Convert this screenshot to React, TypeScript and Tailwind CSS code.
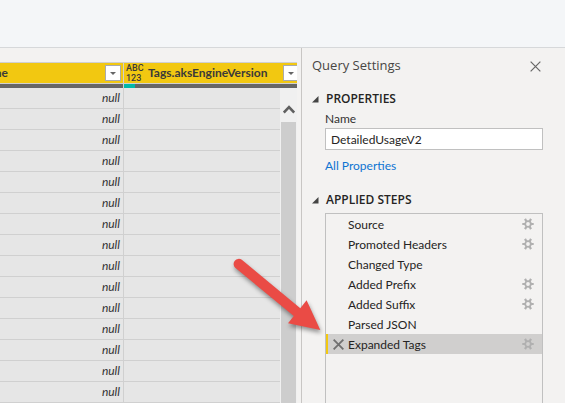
import React from "react";

type Step = { name: string; configurable: boolean };

const steps: Step[] = [
  { name: "Source", configurable: true },
  { name: "Promoted Headers", configurable: true },
  { name: "Changed Type", configurable: false },
  { name: "Added Prefix", configurable: true },
  { name: "Added Suffix", configurable: true },
  { name: "Parsed JSON", configurable: false },
  { name: "Expanded Tags", configurable: true },
];

const rows = Array.from({ length: 15 }, (_, i) => i);

function Gear() {
  return (
    <svg width="12" height="12" viewBox="0 0 12 12" fill="none" stroke="#b0b0b0" aria-hidden="true">
      <circle cx="6" cy="6" r="2.8" strokeWidth="1.8" />
      <path d="M0.3 6H3M9 6h2.7M3 0.9l1.5 2.6M7.5 8.5l1.5 2.6M9 0.9L7.5 3.5M4.5 8.5L3 11.1" strokeWidth="2.2" />
    </svg>
  );
}

function Cross({ size, color, weight }: { size: number; color: string; weight: number }) {
  return (
    <svg width={size} height={size} viewBox="0 0 12 12" fill="none" stroke={color} strokeWidth={weight} aria-hidden="true">
      <path d="M0.7 0.7l10.6 10.6M11.3 0.7L0.7 11.3" />
    </svg>
  );
}

function FilterButton({ label }: { label: string }) {
  return (
    <button type="button" aria-label={label} className="flex size-4 shrink-0 items-center justify-center border border-[#ababab] bg-white">
      <svg width="6" height="3" viewBox="0 0 6 3" aria-hidden="true">
        <path d="M0 0h6L3 3z" fill="#666" />
      </svg>
    </button>
  );
}

function SectionTitle({ children }: { children: React.ReactNode }) {
  return (
    <h3 className="flex h-4 items-center font-['Open_Sans','Noto_Sans',sans-serif] text-xs font-semibold text-[#252423]">
      <svg width="7" height="7" viewBox="0 0 7 7" className="mr-[7px]" aria-hidden="true">
        <path d="M6.5 0v6.5H0z" fill="#444" />
      </svg>
      {children}
    </h3>
  );
}

function DataGrid() {
  return (
    <div className="relative mr-1 min-w-0 flex-1 overflow-hidden pt-[14px]">
      <table className="w-full table-fixed border-separate border-spacing-0 bg-[#e6e6e6]">
        <thead>
          <tr>
            <th className="w-[124px] border-y border-r border-[#d0d0d0] bg-[#f2c811] p-0">
              <div className="flex h-5 items-center justify-between overflow-hidden pr-[2px] text-xs font-bold text-[#3b3a39]">
                <span className="flex w-2 justify-end">ne</span>
                <FilterButton label="Filter name column" />
              </div>
            </th>
            <th className="border-y border-[#d0d0d0] bg-[#f2c811] p-0">
              <div className="flex h-5 items-center pl-[2px] text-[#3b3a39]">
                <span className="flex w-[22px] shrink-0 flex-col text-left font-[Roboto,'Noto_Sans',sans-serif] text-[9px] leading-[10px] font-medium">
                  <span>ABC</span>
                  <span>123</span>
                </span>
                <span className="flex-1 text-left text-xs font-bold whitespace-nowrap">Tags.aksEngineVersion</span>
                <span className="-mr-[2px]">
                  <FilterButton label="Filter Tags.aksEngineVersion" />
                </span>
              </div>
            </th>
          </tr>
          <tr>
            <td className="h-1 border-r border-[#d0d0d0] bg-[#666] p-0" />
            <td className="h-1 bg-[#666] p-0">
              <div className="h-1 w-[11px] bg-[#01b8aa]" />
            </td>
          </tr>
        </thead>
        <tbody>
          {rows.map((row) => (
            <tr key={row}>
              <td className="h-[21px] border-r border-b border-[#d0d0d0] p-0 pr-[3px] text-right text-xs leading-5 text-[#333] italic">
                null
              </td>
              <td className="border-b border-[#d0d0d0] p-0" />
            </tr>
          ))}
        </tbody>
      </table>
      <div className="absolute top-10 right-0 bottom-0 flex w-[17px] flex-col items-center bg-[#f0f0f0]">
        <svg width="12" height="34" viewBox="0 0 12 34" className="shrink-0" fill="none" stroke="#606060" strokeWidth="2.6" aria-hidden="true">
          <path d="M0.8 24.5L6 19.2l5.2 5.3" />
        </svg>
        <div className="w-[15px] flex-1 bg-[#cdcdcd]" />
      </div>
    </div>
  );
}

function QuerySettings() {
  return (
    <aside className="flex w-[264px] shrink-0 flex-col border-l border-[#c8c6c4] pr-[22px] pl-[10px]">
      <header className="flex h-9 items-center justify-between pr-[2px]">
        <h2 className="font-['Open_Sans','Noto_Sans',sans-serif] text-[13px] text-[#484644]">Query Settings</h2>
        <button type="button" aria-label="Close">
          <Cross size={11} color="#666" weight={1.3} />
        </button>
      </header>
      <div className="pt-[7px]">
        <SectionTitle>PROPERTIES</SectionTitle>
      </div>
      <div className="flex flex-col items-start pt-1 pl-[13px] text-xs text-[#333]">
        <label htmlFor="query-name" className="leading-4">
          Name
        </label>
        <input
          id="query-name"
          defaultValue="DetailedUsageV2"
          className="mt-[1px] h-[22px] w-full border border-[#c0c0c0] bg-white px-[5px] text-[#252423] outline-none"
        />
        <a href="#properties" className="mt-2 leading-4 text-[#0e74d1]">
          All Properties
        </a>
      </div>
      <div className="pt-[18px]">
        <SectionTitle>APPLIED STEPS</SectionTitle>
      </div>
      <ul className="mt-[5px] ml-[13px] flex-1 border border-b-0 border-[#c0c0c0] text-xs text-[#252423]">
        {steps.map((step) => {
          const selected = step.name === "Expanded Tags";
          return (
            <li
              key={step.name}
              className={
                selected
                  ? "flex h-5 items-center border-l-2 border-[#f2c811] bg-[#d0cfce] pr-2"
                  : "flex h-5 items-center border-l-2 border-transparent pr-2"
              }
            >
              <span className="flex w-5 shrink-0 pl-[5px]">
                {selected && (
                  <button type="button" aria-label="Delete step">
                    <Cross size={11} color="#707070" weight={2} />
                  </button>
                )}
              </span>
              <span className="flex-1 pt-[2px]">{step.name}</span>
              {step.configurable && (
                <button type="button" aria-label={"Edit " + step.name}>
                  <Gear />
                </button>
              )}
            </li>
          );
        })}
      </ul>
    </aside>
  );
}

export default function App() {
  return (
    <div className="relative flex h-screen flex-col overflow-hidden bg-[#f3f2f1] font-['Lato','Noto_Sans',sans-serif]">
      <div className="h-12 shrink-0 border-b border-[#d6d8da] bg-[#f4f6f8]" />
      <main className="flex min-h-0 flex-1">
        <DataGrid />
        <QuerySettings />
      </main>
      <svg
        className="pointer-events-none absolute top-[250px] right-[235px] drop-shadow-[1px_3px_2px_rgba(0,0,0,0.4)]"
        width="100"
        height="90"
        viewBox="230 250 100 90"
        aria-hidden="true"
      >
        <path d="M241.8 259.8L300.3 308.2L306.6 300.3L320.3 330L288 323.3L293.8 316L235.2 267.8A5.2 5.2 0 0 1 241.8 259.8z" fill="#ea4b45" />
      </svg>
    </div>
  );
}
